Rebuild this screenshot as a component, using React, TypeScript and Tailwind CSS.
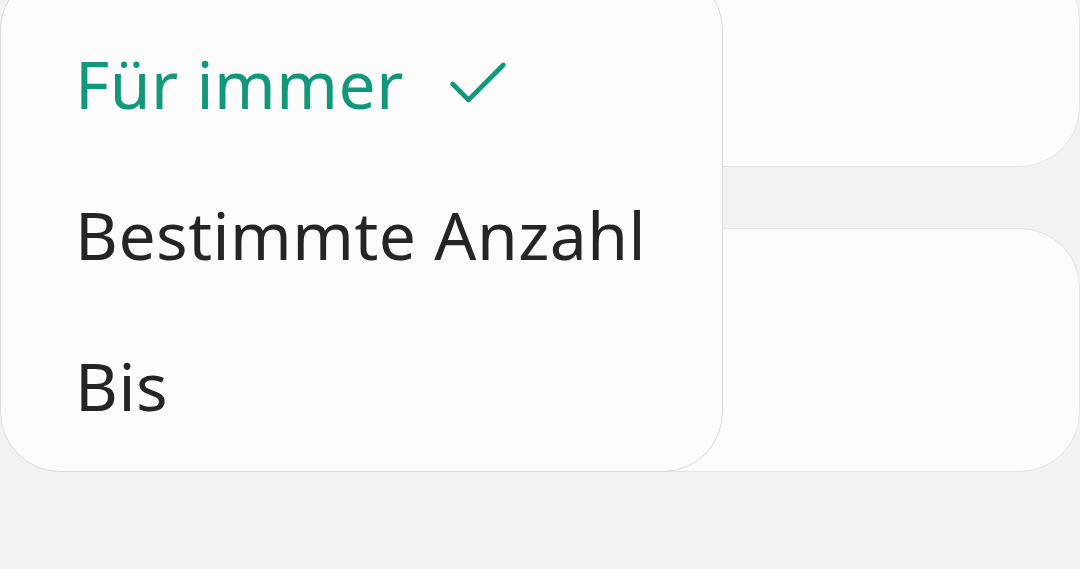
import { Check } from "lucide-react";

const items = [
  { label: "Für immer", selected: true },
  { label: "Bestimmte Anzahl", selected: false },
  { label: "Bis", selected: false },
];

export default function App() {
  return (
    <div
      className="relative h-[569px] w-[1080px] overflow-hidden bg-[#f2f2f2]"
      style={{ fontFamily: '"Noto Sans", "Open Sans", sans-serif' }}
    >
      {/* Karten im Hintergrund */}
      <div className="flex flex-col pl-[120px]">
        <div className="-mt-[40px] h-[207px] rounded-[60px] border border-[#e4e4e4] bg-[#fcfcfc]" />
        <div className="mt-[61px] h-[244px] rounded-[60px] border border-[#e4e4e4] bg-[#fcfcfc]" />
      </div>

      {/* Popup-Menü */}
      <div className="absolute -top-[30px] left-0 h-[502px] w-[723px] rounded-[60px] border border-[#dadada] bg-[#fcfcfc] pt-[30px]">
        <ul className="flex flex-col pl-[74px] pt-[6px]">
          {items.map((it) => (
            <li
              key={it.label}
              className={`flex h-[151px] items-center gap-[36px] text-[66px] leading-none tracking-[0.5px] ${
                it.selected ? "text-[#11977a]" : "text-[#252525]"
              }`}
            >
              <span>{it.label}</span>
              {it.selected && <Check className="mt-[2px] h-[76px] w-[76px]" strokeWidth={1.5} />}
            </li>
          ))}
        </ul>
      </div>
    </div>
  );
}
